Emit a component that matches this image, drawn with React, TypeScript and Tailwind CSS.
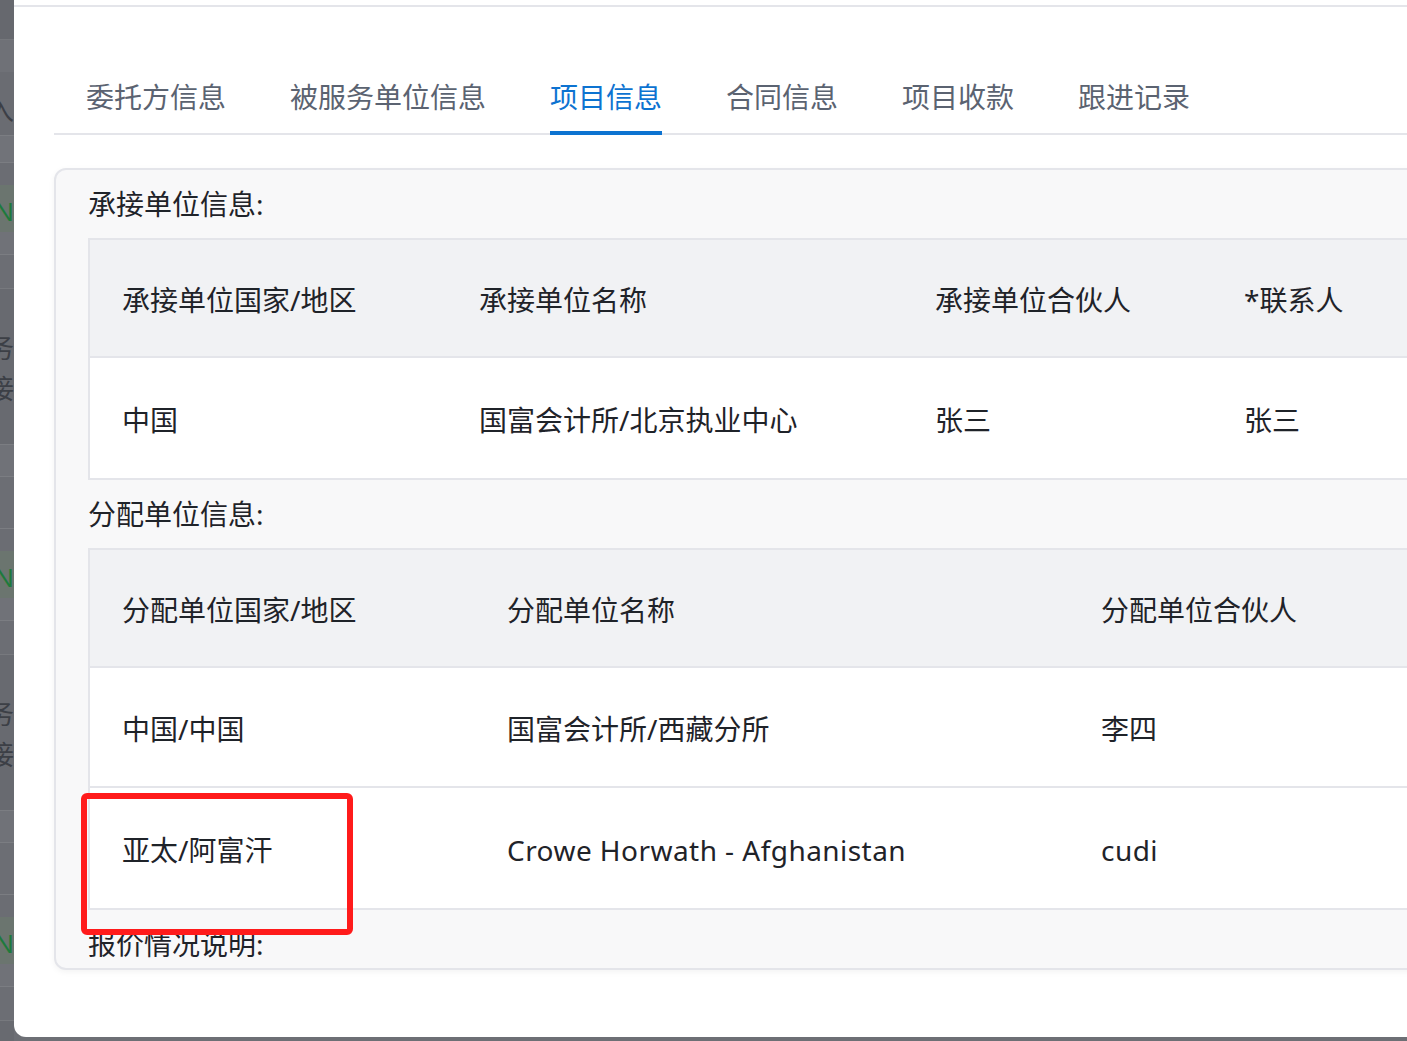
import React from 'react';

const font = "font-['Noto_Sans','Noto_Sans_CJK_SC',sans-serif]";

const tabs = ['委托方信息', '被服务单位信息', '项目信息', '合同信息', '项目收款', '跟进记录'];
const activeTab = 2;

type Table = {
  widths: string[];
  head: string[];
  rows: string[][];
};

const undertakeTable: Table = {
  widths: ['w-[357px]', 'w-[456px]', 'w-[309px]', 'w-[340px]'],
  head: ['承接单位国家/地区', '承接单位名称', '承接单位合伙人', '*联系人'],
  rows: [['中国', '国富会计所/北京执业中心', '张三', '张三']],
};

const allotTable: Table = {
  widths: ['w-[385px]', 'w-[594px]', 'w-[483px]'],
  head: ['分配单位国家/地区', '分配单位名称', '分配单位合伙人'],
  rows: [
    ['中国/中国', '国富会计所/西藏分所', '李四'],
    ['亚太/阿富汗', 'Crowe Horwath - Afghanistan', 'cudi'],
  ],
};

// the page behind the modal, seen through the overlay
function BackdropGroup() {
  return (
    <div className="flex flex-col">
      <div className="h-[22px] bg-[#6b6d73]" />
      <div className="h-[47px] bg-[#6b756f] flex items-center justify-end pt-[4px]">
        <span className="text-[26px] leading-none text-[#1d7a3c] whitespace-nowrap">N</span>
      </div>
      <div className="h-[23px] bg-[#707278] border-b border-[#7b7d82]" />
      <div className="h-[34px] bg-[#6c6e74] border-b border-[#77797e]" />
      <div className="h-[155px] bg-[#686a70] flex flex-col justify-center items-end gap-[14px] pt-[2px]">
        <span className="text-[27px] leading-none text-[#3c3f46] whitespace-nowrap">服务</span>
        <span className="text-[27px] leading-none text-[#3c3f46] whitespace-nowrap">待接</span>
      </div>
      <div className="h-[33px] bg-[#707278] border-y border-[#7b7d82]" />
      <div className="h-[52px] bg-[#6c6e74] border-b border-[#7b7d82]" />
    </div>
  );
}

function Backdrop() {
  return (
    <div className="w-[14px] shrink-0 overflow-hidden flex flex-col">
      <div className="h-[40px] bg-[#66686e] border-b border-[#75777c]" />
      <div className="h-[32px] bg-[#6f7177]" />
      <div className="h-[63px] bg-[#6a6c72] flex items-center justify-end pt-[12px]">
        <span className="text-[27px] leading-none text-[#3c3f46] whitespace-nowrap">入</span>
      </div>
      <div className="h-[28px] bg-[#717379] border-y border-[#7b7d82]" />
      <BackdropGroup />
      <BackdropGroup />
      <BackdropGroup />
    </div>
  );
}

function Cell({ width, text }: { width: string; text: string }) {
  const latin = /^[\x00-\x7f]+$/.test(text);
  return (
    <div
      className={`${width} shrink-0 pl-[32px] pt-[3px] text-[28px] leading-none text-[#1f2329] ${
        latin ? 'tracking-[0.45px]' : ''
      }`}
    >
      {text}
    </div>
  );
}

function DataTable({ table }: { table: Table }) {
  return (
    <div className="w-[1420px] border-2 border-r-0 border-[#e4e5ea] bg-white">
      <div className="flex h-[118px] items-center bg-[#f1f2f4] border-b-2 border-[#e4e5ea]">
        {table.head.map((h, i) => (
          <Cell key={i} width={table.widths[i]} text={h} />
        ))}
      </div>
      {table.rows.map((row, r) => (
        <div
          key={r}
          className={`flex h-[120px] items-center bg-white ${r < table.rows.length - 1 ? 'border-b-2 border-[#e4e5ea]' : ''}`}
        >
          {row.map((cell, i) => (
            <Cell key={i} width={table.widths[i]} text={cell} />
          ))}
        </div>
      ))}
    </div>
  );
}

function SectionTitle({ children }: { children: React.ReactNode }) {
  return (
    <div className="h-[68px] flex items-center text-[28px] leading-none text-[#1f2329]">{children}</div>
  );
}

export default function App() {
  return (
    <div className={`relative w-[1407px] h-[1041px] overflow-hidden bg-[#6d6f75] flex items-start ${font}`}>
      <Backdrop />

      <div className="w-[1460px] shrink-0 h-[1037px] bg-white rounded-bl-[12px] overflow-hidden">
        <div className="h-[7px] border-b-2 border-[#e4e5ea]" />

        <div className="ml-[40px] mt-[54px] w-[1420px] flex gap-[64px] pl-[32px] border-b-2 border-[#e4e5ea]">
          {tabs.map((t, i) => (
            <div
              key={t}
              className={`relative h-[72px] flex items-center text-[28px] leading-none ${
                i === activeTab ? 'text-[#0d73d1]' : 'text-[#5b6371]'
              }`}
            >
              {t}
              {i === activeTab && (
                <span className="absolute left-0 right-0 -bottom-[2px] h-[4px] bg-[#0d73d1]" />
              )}
            </div>
          ))}
        </div>

        <div className="ml-[40px] mt-[33px] w-[1460px] h-[802px] overflow-hidden rounded-[12px] border-2 border-[#e4e5ea] bg-[#f8f8f9] pl-[32px] shadow-[0_2px_6px_rgba(0,0,0,0.05)]">
          <SectionTitle>承接单位信息:</SectionTitle>
          <DataTable table={undertakeTable} />
          <SectionTitle>分配单位信息:</SectionTitle>
          <DataTable table={allotTable} />
          <SectionTitle>报价情况说明:</SectionTitle>
        </div>
      </div>

      {/* annotation box drawn over the screenshot */}
      <div className="absolute left-[81px] top-[793px] w-[272px] h-[142px] border-[6px] border-[#ff1b1b] rounded-[6px]" />
    </div>
  );
}
